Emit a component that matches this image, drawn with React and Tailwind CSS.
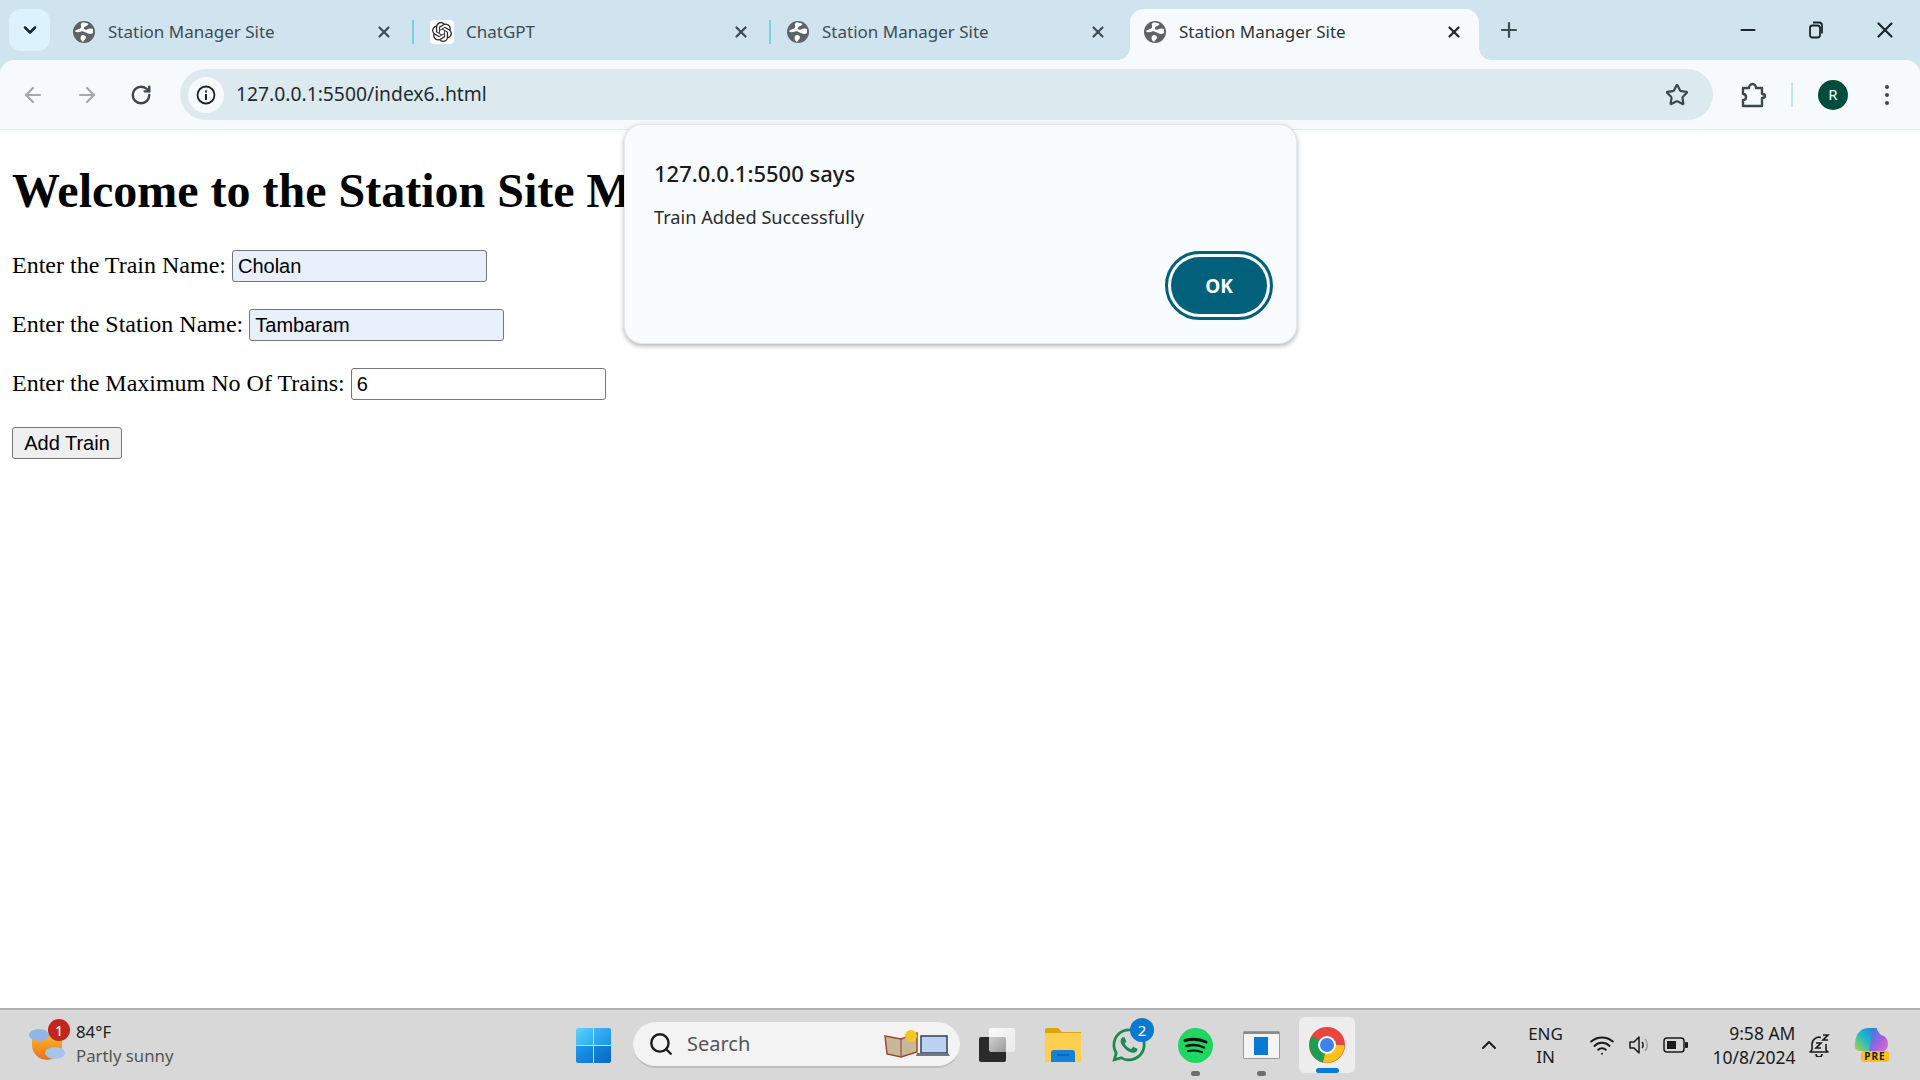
import { ArrowLeft, ArrowRight, RotateCw, Star, X, Plus, ChevronDown, ChevronUp, Minus, Search, Wifi } from 'lucide-react';
import { SiOpenai } from 'react-icons/si';
import { FaWhatsapp } from 'react-icons/fa';

const uiFont = 'font-["Noto_Sans",sans-serif]';

function Globe() {
  return (
    <svg width="22" height="22" viewBox="0 0 22 22" className="shrink-0">
      <circle cx="11" cy="11" r="11" fill="#5f6368" />
      <path d="M9 1.500c3 0 5 .5 6.500 1.500-1 2-3.500 2-4.500 3.500s1 3 3 2 4-1.500 6-.5v4c-2 1.500-4 1-6 0s-4-2.500-6-1.500-4.500 1-6 0c.5-1.500 2-2 4-2.500s2.500-2 2-3.500S8 3 9 1.500z" fill="#fff" />
      <path d="M10 14c1.500 0 3 1 3 2.500S11 19 10 21c-1.500-1-2.500-2.500-2.500-4S8.500 14 10 14z" fill="#fff" />
    </svg>
  );
}

function ChatIcon() {
  return (
    <div className="flex h-[24px] w-[24px] shrink-0 items-center justify-center rounded-[4px] bg-white">
      <SiOpenai size={20} color="#2b2b2b" />
    </div>
  );
}

function Tab({ title, icon, active, sep, textGap = 13 }) {
  if (active) {
    return (
      <div className="relative flex h-[51px] w-[349px] items-center self-end rounded-t-[14px] bg-[#f6fafd] pl-[14px] pr-[16px]">
        <div className="absolute bottom-0 left-[-12px] h-[12px] w-[12px] bg-[radial-gradient(circle_at_0_0,transparent_11.5px,#f6fafd_12px)]" />
        <div className="absolute bottom-0 right-[-12px] h-[12px] w-[12px] bg-[radial-gradient(circle_at_100%_0,transparent_11.5px,#f6fafd_12px)]" />
        <div className="mt-[-6px] flex w-full items-center">
          {icon}
          <span className="ml-[13px] flex-1 text-[17px] text-[#2a3439]">{title}</span>
          <X size={18} strokeWidth={3} color="#1f2a30" />
        </div>
      </div>
    );
  }
  return (
    <div className="flex h-[51px] w-[357px] items-center self-end pb-[6px] pl-[14px]">
      {icon}
      <span className={`flex-1 text-[17px] text-[#414c52] ${textGap === 13 ? 'ml-[13px]' : 'ml-[12px]'}`}>{title}</span>
      <X size={18} strokeWidth={3} color="#414c52" />
      <div className={`ml-[19px] mr-[2px] h-[24px] w-[2px] ${sep ? 'bg-[#7bcdec]' : 'bg-transparent'}`} />
    </div>
  );
}

function TabStrip() {
  return (
    <div className="flex h-[60px] items-stretch pl-[9px]">
      <div className="mt-[9px] flex h-[42px] w-[41px] items-center justify-center rounded-[12px] bg-[#dcf3fe]">
        <ChevronDown size={20} strokeWidth={3} color="#1b2429" />
      </div>
      <div className="ml-[8px] flex">
        <div className="w-[1px]" />
        <Tab title="Station Manager Site" icon={<Globe />} sep />
        <Tab title="ChatGPT" icon={<ChatIcon />} sep textGap={12} />
        <Tab title="Station Manager Site" icon={<Globe />} />
        <Tab title="Station Manager Site" icon={<Globe />} active />
      </div>
      <div className="ml-[18px] flex items-center">
        <Plus size={24} strokeWidth={2.2} color="#414c52" />
      </div>
      <div className="ml-auto flex items-center">
        <div className="flex w-[68px] justify-center"><Minus size={22} strokeWidth={2.4} color="#1b2429" /></div>
        <div className="flex w-[68px] justify-center">
          <svg width="18" height="18" viewBox="0 0 18 18" fill="none" stroke="#1b2429" strokeWidth="1.8">
            <rect x="3" y="4.500" width="10" height="12" rx="2.500" />
            <path d="M6 1.500h6a3 3 0 0 1 3 3v8" />
          </svg>
        </div>
        <div className="flex w-[70px] justify-center"><X size={26} strokeWidth={2} color="#1b2429" /></div>
      </div>
    </div>
  );
}

function Toolbar() {
  return (
    <div className="flex h-[69px] items-center rounded-t-[14px] bg-[#f6fafd] pl-[6px]">
      <div className="flex w-[54px] justify-center"><ArrowLeft size={24} strokeWidth={2.2} color="#a3a8ab" /></div>
      <div className="flex w-[54px] justify-center"><ArrowRight size={24} strokeWidth={2.2} color="#a3a8ab" /></div>
      <div className="flex w-[54px] justify-center"><RotateCw size={22} strokeWidth={2.6} color="#3b474d" /></div>
      <div className="ml-[12px] flex h-[51px] flex-1 items-center rounded-full bg-[#dceaef] pl-[8px] pr-[24px]">
        <div className="flex h-[36px] w-[36px] items-center justify-center rounded-full bg-[#f6fafd]">
          <svg width="20" height="20" viewBox="0 0 20 20">
            <circle cx="10" cy="10" r="8.500" fill="none" stroke="#1b2429" strokeWidth="1.800" />
            <rect x="9" y="9" width="2" height="6" fill="#1b2429" />
            <rect x="9" y="5.500" width="2" height="2" fill="#1b2429" />
          </svg>
        </div>
        <span className="ml-[12px] flex-1 text-[19.300px] text-[#1f2a30]">127.0.0.1:5500/index6..html</span>
        <Star size={24} strokeWidth={2.2} color="#3b474d" />
      </div>
      <div className="flex w-[207px] items-center">
        <svg width="26" height="28" viewBox="0 0 26 28" fill="none" stroke="#3b474d" strokeWidth="2.400" className="ml-[28px]">
          <path d="M2 7h6c0-2 1.500-4 3.500-4S15 5 15 7h6v6c2 0 3 .5 3 2s-1 2-3 2v8H2v-6c2 0 3-1 3-3s-1-3-3-3V7z" strokeLinejoin="round" />
        </svg>
        <div className="ml-[24px] h-[24px] w-[2px] bg-[#bde6f8]" />
        <div className="ml-[25px] flex h-[30px] w-[30px] items-center justify-center rounded-full bg-[#004d3d] text-[15px] text-white">R</div>
        <div className="ml-[37px] flex flex-col gap-[4px]">
          <div className="h-[4px] w-[4px] rounded-full bg-[#3b474d]" />
          <div className="h-[4px] w-[4px] rounded-full bg-[#3b474d]" />
          <div className="h-[4px] w-[4px] rounded-full bg-[#3b474d]" />
        </div>
      </div>
    </div>
  );
}

function FormRow({ label, value, filled }) {
  return (
    <div className="flex h-[32px] items-center gap-[6px]">
      <span className="mt-[-2px] text-[24px] text-black">{label}</span>
      <input
        readOnly
        value={value}
        className={`h-[32px] w-[255px] rounded-[3px] border-[1.5px] border-[#767676] px-[5px] font-["Liberation_Sans",sans-serif] text-[20px] text-black ${filled ? 'bg-[#e8f0fe]' : 'bg-white'}`}
      />
    </div>
  );
}

function Page() {
  return (
    <div className='flex-1 px-[12px] font-["Liberation_Serif",serif]'>
      <h1 className="mt-[33px] text-[48px] font-bold leading-[55px] text-black">Welcome to the Station Site Manager</h1>
      <div className="mt-[32px] flex flex-col items-start gap-[27px]">
        <FormRow label="Enter the Train Name:" value="Cholan" filled />
        <FormRow label="Enter the Station Name:" value="Tambaram" filled />
        <FormRow label="Enter the Maximum No Of Trains:" value="6" />
        <button className='h-[32px] w-[110px] rounded-[3px] border-[1.5px] border-[#767676] bg-[#efefef] font-["Liberation_Sans",sans-serif] text-[20px] text-black'>Add Train</button>
      </div>
    </div>
  );
}

function AlertDialog() {
  return (
    <div className="absolute left-[624px] top-[124px] h-[220px] w-[673px] rounded-[18px] border border-[#e2e8ec] bg-[#f9fcff] pl-[29px] shadow-[0_2px_5px_rgba(0,0,0,0.3)]">
      <div className="mt-[33px] text-[22px] font-medium leading-[30px] text-[#1a1a1a]">127.0.0.1:5500 says</div>
      <div className="mt-[17px] text-[18.200px] leading-[24px] text-[#2b2b2b]">Train Added Successfully</div>
      <div className="absolute right-[23px] top-[126px] flex h-[69px] w-[108px] items-center justify-center rounded-full border-[3px] border-[#03607a] bg-[#f9fcff]">
        <div className="flex h-[57px] w-[96px] items-center justify-center rounded-full bg-[#03607a] pt-[1px] text-[19px] font-bold text-white">OK</div>
      </div>
    </div>
  );
}

function Weather() {
  return (
    <div className="flex w-[576px] items-center pl-[28px]">
      <div className="relative h-[40px] w-[38px]">
        <svg width="38" height="40" viewBox="0 0 38 40">
          <defs>
            <linearGradient id="sun" x1="0" y1="0" x2="0" y2="1">
              <stop offset="0" stopColor="#fbb92b" />
              <stop offset="1" stopColor="#ec6c1f" />
            </linearGradient>
          </defs>
          <path d="M4 10h30v10a15 15 0 0 1-30 0z" fill="url(#sun)" />
          <ellipse cx="11" cy="10" rx="10" ry="6" fill="#90b5e6" />
          <ellipse cx="27" cy="28" rx="10" ry="6" fill="#a6c4ee" />
        </svg>
        <div className="absolute right-[-4px] top-[-6px] flex h-[22px] w-[22px] items-center justify-center rounded-full bg-[#c4261d] text-[14px] font-medium text-white">1</div>
      </div>
      <div className="ml-[10px] flex flex-col">
        <span className="mt-[-2px] text-[16.800px] leading-[24px] text-[#1b1b1b]">84°F</span>
        <span className="text-[16.800px] leading-[24px] text-[#555]">Partly sunny</span>
      </div>
    </div>
  );
}

function WindowsLogo() {
  return (
    <div className="grid h-[35px] w-[35px] grid-cols-2 gap-[1px]">
      <div className="rounded-tl-[2px] bg-[linear-gradient(135deg,#5fd4fb,#2aa9ee)]" />
      <div className="rounded-tr-[2px] bg-[linear-gradient(135deg,#3fb5f3,#1a95e6)]" />
      <div className="rounded-bl-[2px] bg-[linear-gradient(135deg,#1f9ae8,#0a7ad6)]" />
      <div className="rounded-br-[2px] bg-[linear-gradient(135deg,#1488dd,#0467c8)]" />
    </div>
  );
}

function SearchBox() {
  return (
    <div className="ml-[22px] flex h-[46px] w-[327px] items-center rounded-full border-b-2 border-[#bdbdbd] bg-[#f3f3f3] pl-[15px]">
      <Search size={26} strokeWidth={2.2} color="#1b1b1b" />
      <span className="ml-[13px] text-[20px] text-[#555]">Search</span>
      <svg width="66" height="30" viewBox="0 0 66 30" className="ml-auto mr-[10px]">
        <path d="M1 7l16 3 16-6v19l-16 5-14-3z" fill="#c9b79c" stroke="#a0482c" strokeWidth="1.500" />
        <path d="M17 10v18" stroke="#7a4a30" />
        <circle cx="27" cy="7" r="6" fill="#f2c81e" />
        <rect x="37" y="7" width="26" height="17" fill="#bcd2f2" stroke="#3a4048" strokeWidth="1.500" />
        <path d="M33 24h31l2 3H32z" fill="#6c7686" />
      </svg>
    </div>
  );
}

function TaskView() {
  return (
    <div className="relative ml-[19px] h-[34px] w-[36px]">
      <div className="absolute bottom-0 left-0 h-[25px] w-[27px] rounded-[2px] bg-[#2b2b2b]" />
      <div className="absolute right-0 top-0 h-[24px] w-[26px] rounded-[2px] bg-[linear-gradient(135deg,rgba(255,255,255,0.85),rgba(255,255,255,0.45))]" />
    </div>
  );
}

function Folder() {
  return (
    <svg width="36" height="34" viewBox="0 0 36 34" className="ml-[30px]">
      <path d="M0 2a2 2 0 0 1 2-2h11l4 4h19v6H0z" fill="#e0a30c" />
      <path d="M0 5h36v29H0z" fill="#fdcf4e" />
      <path d="M6 25a3 3 0 0 1 3-3h18a3 3 0 0 1 3 3v9H6z" fill="#1480d8" />
      <path d="M12 27h12" stroke="#0b5fa8" strokeWidth="1.500" />
    </svg>
  );
}

function WhatsApp() {
  return (
    <div className="relative ml-[29px] mr-[1px] h-[38px] w-[36px]">
      <FaWhatsapp size={38} color="#1b8a55" />
      <div className="absolute right-[-8px] top-[-8px] flex h-[24px] w-[24px] items-center justify-center rounded-full bg-[#0b78d4] text-[15px] text-white">2</div>
    </div>
  );
}

function Spotify() {
  return (
    <div className="relative ml-[30.500px] h-[35px] w-[35px]">
      <svg width="35" height="35" viewBox="0 0 35 35">
        <circle cx="17.500" cy="17.500" r="17.500" fill="#1ed760" />
        <g fill="none" stroke="#111" strokeLinecap="round">
          <path d="M7 12.500c7-2 15-1.500 21 1.500" strokeWidth="3" />
          <path d="M8.500 18c6-1.500 12.500-1 17.500 1.500" strokeWidth="2.500" />
          <path d="M10 23c5-1 10-.8 14 1.200" strokeWidth="2" />
        </g>
      </svg>
      <div className="absolute bottom-[-13px] left-[13px] h-[5px] w-[9px] rounded-full bg-[#6e6e6e]" />
    </div>
  );
}

function StoreApp() {
  return (
    <div className="relative ml-[30px] h-[28px] w-[37px]">
      <div className="flex h-full w-full flex-col rounded-[1px] border border-[#9a9a9a] bg-[#f4f4f4]">
        <div className="h-[2px] bg-[#8a8a8a]" />
        <div className="mx-auto mt-[3px] h-[18px] w-[14px] bg-[#0b78d4]" />
      </div>
      <div className="absolute bottom-[-17px] left-[14px] h-[5px] w-[9px] rounded-full bg-[#6e6e6e]" />
    </div>
  );
}

function ChromeIcon() {
  return (
    <div className="relative ml-[19px] flex h-[56px] w-[56px] items-center justify-center rounded-[6px] bg-[#ededed]">
      <svg width="36" height="36" viewBox="0 0 36 36">
        <circle cx="18" cy="18" r="18" fill="#e8453c" />
        <path d="M18 18L3 9A18 18 0 0 0 14 35.500z" fill="#1e9e50" />
        <path d="M18 18h17.500A18 18 0 0 1 14 35.500z" fill="#fbc116" />
        <circle cx="18" cy="18" r="9" fill="#fff" />
        <circle cx="18" cy="18" r="7" fill="#3f80f0" />
      </svg>
      <div className="absolute bottom-0 left-[17px] h-[5px] w-[23px] rounded-full bg-[#0b78d4]" />
    </div>
  );
}

function Tray() {
  return (
    <div className="ml-[122px] flex items-center text-[#1b1b1b]">
      <ChevronUp size={24} strokeWidth={2} />
      <div className="ml-[23px] flex w-[44px] flex-col items-center text-[17px] leading-[23px]">
        <span>ENG</span>
        <span>IN</span>
      </div>
      <Wifi size={26} strokeWidth={1.800} className="ml-[21px]" />
      <svg width="24" height="24" viewBox="0 0 24 24" fill="none" stroke="#1b1b1b" strokeWidth="1.500" className="ml-[13px]">
        <path d="M2 9v6h4l5 5V4L6 9H2z" strokeLinejoin="round" />
        <path d="M14 9c1.500 1.500 1.500 4.500 0 6" />
        <path d="M17 6c3 3 3 9 0 12" stroke="#9a9a9a" />
      </svg>
      <svg width="26" height="16" viewBox="0 0 26 16" className="ml-[11px]">
        <rect x="1" y="1" width="20" height="14" rx="3" fill="none" stroke="#1b1b1b" strokeWidth="1.500" />
        <rect x="4" y="4" width="9" height="8" fill="#1b1b1b" />
        <rect x="22" y="5" width="3" height="6" rx="1" fill="#1b1b1b" />
      </svg>
      <div className="ml-[18px] flex w-[89px] flex-col items-end text-[17.500px] leading-[24px]">
        <span>9:58 AM</span>
        <span>10/8/2024</span>
      </div>
      <div className="relative ml-[12px] h-[24px] w-[22px]">
        <svg width="22" height="24" viewBox="0 0 22 24" fill="none" stroke="#1b1b1b" strokeWidth="1.600">
          <path d="M4 17V11a7 7 0 0 1 9-6.500M18 11v6l2 2H2l2-2M8 21a3 3 0 0 0 6 0" strokeLinejoin="round" />
          <path d="M8 10h5l-5 5h5M15 2h5l-5 5h5" />
        </svg>
      </div>
      <svg width="36" height="36" viewBox="0 0 36 36" className="ml-[23px]">
        <defs>
          <linearGradient id="cop1" x1="0" y1="1" x2="1" y2="0">
            <stop offset="0" stopColor="#b7d43a" />
            <stop offset="0.500" stopColor="#1fb8c8" />
            <stop offset="1" stopColor="#1f7be8" />
          </linearGradient>
          <linearGradient id="cop2" x1="0" y1="0" x2="1" y2="1">
            <stop offset="0" stopColor="#2f7fe8" />
            <stop offset="0.600" stopColor="#a860e0" />
            <stop offset="1" stopColor="#ee6fb8" />
          </linearGradient>
        </defs>
        <path d="M2 16C3 5 9 1 16 1h8l-7 23H7c-4 0-6-3-5-8z" fill="url(#cop1)" />
        <path d="M20 1c3 0 5 2 6 5l2 2c5 1 7 5 7 9 0 5-3 8-8 8H16z" fill="url(#cop2)" />
        <rect x="8" y="24" width="28" height="11" rx="3" fill="#fbbf24" />
        <text x="22" y="33" textAnchor="middle" fontSize="10" fontWeight="700" fill="#1b1b1b" letterSpacing="1">PRE</text>
      </svg>
    </div>
  );
}

function Taskbar() {
  return (
    <div className="flex h-[72px] items-center border-t-2 border-[#b0b0b0] bg-[#d8d8d8]">
      <Weather />
      <WindowsLogo />
      <SearchBox />
      <TaskView />
      <Folder />
      <WhatsApp />
      <Spotify />
      <StoreApp />
      <ChromeIcon />
      <Tray />
    </div>
  );
}

export default function App() {
  return (
    <div className={`relative flex h-screen w-screen flex-col overflow-hidden bg-white ${uiFont}`}>
      <div className="bg-[#cfe4ef]">
        <TabStrip />
        <Toolbar />
      </div>
      <div className="h-px bg-[#e5ecef]" />
      <Page />
      <Taskbar />
      <AlertDialog />
    </div>
  );
}
